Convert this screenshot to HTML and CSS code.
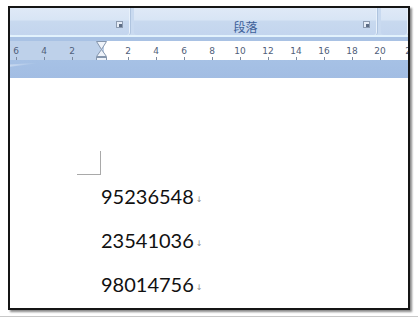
FILE: index.html
```html
<!DOCTYPE html>
<html lang="zh">
<head>
    <meta charset="UTF-8">
    <title>段落</title>
    <link rel="stylesheet" href="styles.css">
</head>
<body>
    <div class="page">
        <div class="frame">
            <div class="ribbon">
                <div class="group group-font">
                    <span class="launcher"></span>
                </div>
                <div class="group group-para">
                    <span class="label">段落</span>
                    <span class="launcher"></span>
                </div>
                <div class="group group-rest"></div>
            </div>
            <div class="ribbon-edge"></div>
            <div class="ruler-top"></div>
            <div class="ruler">
                <div class="marks">
                    <div class="mark"><span>6</span><i></i></div>
                    <div class="mark"><span>4</span><i></i></div>
                    <div class="mark"><span>2</span><i></i></div>
                    <div class="mark"></div>
                    <div class="mark"><span>2</span><i></i></div>
                    <div class="mark"><span>4</span><i></i></div>
                    <div class="mark"><span>6</span><i></i></div>
                    <div class="mark"><span>8</span><i></i></div>
                    <div class="mark"><span>10</span><i></i></div>
                    <div class="mark"><span>12</span><i></i></div>
                    <div class="mark"><span>14</span><i></i></div>
                    <div class="mark"><span>16</span><i></i></div>
                    <div class="mark"><span>18</span><i></i></div>
                    <div class="mark"><span>20</span><i></i></div>
                    <div class="mark"><span>2</span><i></i></div>
                </div>
                <svg class="indent" width="13" height="24" viewBox="0 0 13 24">
                    <path d="M1.5 0.5 H11.5 L6.5 8.5 Z" fill="#eef3fa" stroke="#8596ad"/>
                    <path d="M6.5 8.5 L11.5 15.5 H1.5 Z" fill="#eef3fa" stroke="#8596ad"/>
                    <rect x="1.5" y="16.5" width="10" height="6" fill="#eef3fa" stroke="#8596ad"/>
                </svg>
            </div>
            <div class="ruler-bottom">
                <div class="streak"></div>
            </div>
            <div class="doc">
                <div class="corner"></div>
                <div class="lines">
                    <p>95236548<span class="br">↓</span></p>
                    <p>23541036<span class="br">↓</span></p>
                    <p>98014756<span class="br">↓</span></p>
                </div>
            </div>
        </div>
    </div>
</body>
</html>
```

FILE: styles.css
```css
body, html {
    margin: 0;
    padding: 0;
    background-color: #ffffff;
    font-family: "Liberation Sans", Arial, sans-serif;
}
.page {
    height: 316px;
    border-bottom: 1px solid #c8c8c8;
    overflow: hidden;
}
.frame {
    margin: 6px 0 0 8px;
    width: 398px;
    height: 300px;
    border: 2px solid #151515;
    box-shadow: 2px 2px 2px #8a8a8a;
    display: flex;
    flex-direction: column;
    overflow: hidden;
    background-color: #ffffff;
}
.ribbon {
    display: flex;
    gap: 3px;
    height: 30px;
    background-color: #c9daf0;
}
.group {
    position: relative;
    box-sizing: border-box;
    background: linear-gradient(#dfe9f7 0, #d8e5f5 12px, #c8d9ef 13px, #c3d5ee 100%);
    border-right: 1px solid #afc4df;
    box-shadow: inset -1px 0 #e8f1fb;
    border-radius: 0 0 3px 3px;
    display: flex;
    align-items: flex-end;
    justify-content: center;
}
.group-font {
    width: 121px;
}
.group-para {
    width: 244px;
}
.group-rest {
    flex-grow: 1;
    border-right: none;
}
.label {
    font-family: "Noto Sans CJK SC", sans-serif;
    font-size: 12px;
    line-height: 14px;
    color: #3e6199;
    margin-bottom: 1px;
    margin-right: 20px;
}
.launcher {
    position: absolute;
    right: 7px;
    bottom: 7px;
    width: 5px;
    height: 5px;
    border: 1px solid #8c9bb0;
    background-color: #e6edf7;
}
.launcher::after {
    content: "";
    position: absolute;
    right: 0;
    bottom: 0;
    width: 3px;
    height: 3px;
    background-color: #5d6d85;
}
.ribbon-edge {
    height: 2px;
    background-color: #e2f2fc;
}
.ruler-top {
    height: 4px;
    background-color: #a9c2e4;
}
.ruler {
    position: relative;
    height: 20px;
    background: linear-gradient(to right, #bed1ea 94px, #ffffff 94px);
}
.marks {
    display: flex;
    margin-left: -8px;
}
.mark {
    flex: 0 0 28px;
    display: flex;
    flex-direction: column;
    align-items: center;
    font-family: "DejaVu Sans", sans-serif;
    font-size: 9px;
    line-height: 10px;
    color: #50607a;
    padding-top: 5px;
}
.mark i {
    display: block;
    width: 1px;
    height: 3px;
    margin-top: 1px;
    background-color: #7c8aa0;
}
.indent {
    position: absolute;
    left: 85px;
    top: 0;
}
.ruler-bottom {
    position: relative;
    height: 20px;
    background: linear-gradient(#a6c1e5, #a2bde3);
}
.streak {
    position: absolute;
    left: 0;
    top: 3px;
    width: 26px;
    height: 4px;
    background: linear-gradient(to right, #c7d8ef, #a6c1e5);
    clip-path: polygon(0 40%, 100% 0, 100% 20%, 0 100%);
}
.doc {
    flex-grow: 1;
    background-color: #ffffff;
}
.corner {
    margin: 73px 0 0 67px;
    width: 23px;
    height: 23px;
    border-right: 1px solid #a9a9a9;
    border-bottom: 1px solid #a9a9a9;
}
.lines {
    margin: 1px 0 0 91px;
}
.lines p {
    margin: 0;
    font-family: Lato, "Open Sans", sans-serif;
    font-size: 20px;
    line-height: 41px;
    color: #111111;
}
.br {
    font-family: "DejaVu Sans", sans-serif;
    font-size: 8px;
    color: #8a8a8a;
    margin-left: 2px;
    vertical-align: 2px;
}
```
